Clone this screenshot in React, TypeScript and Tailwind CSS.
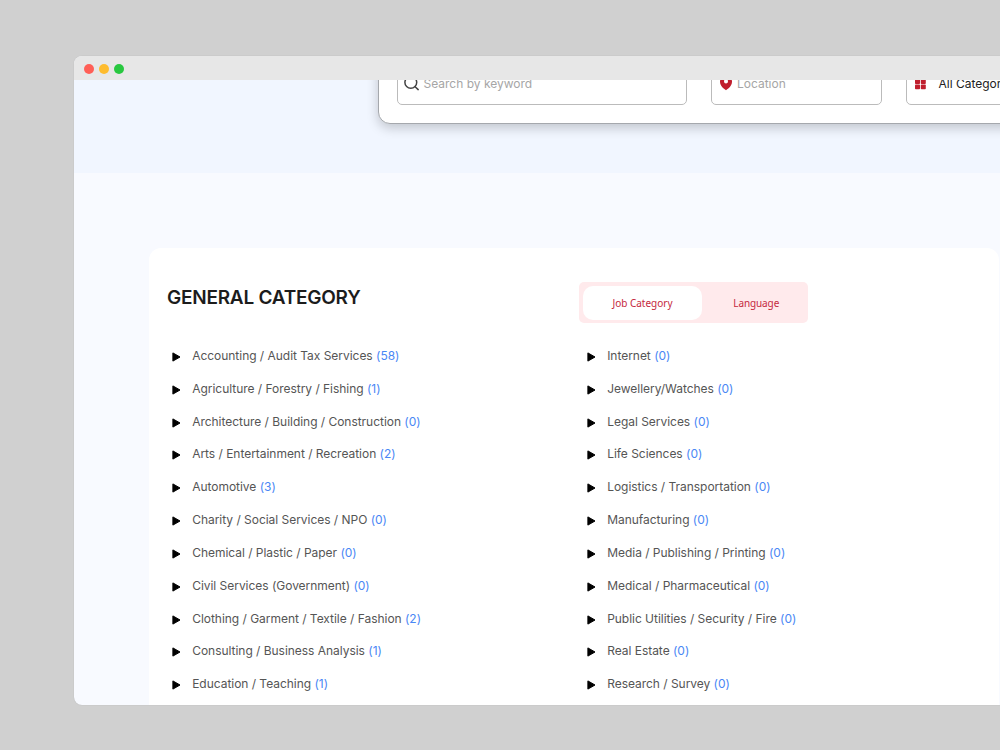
import React from "react";

type Category = { label: string; count: number };

const leftCategories: Category[] = [
  { label: "Accounting / Audit Tax Services", count: 58 },
  { label: "Agriculture / Forestry / Fishing", count: 1 },
  { label: "Architecture / Building / Construction", count: 0 },
  { label: "Arts / Entertainment / Recreation", count: 2 },
  { label: "Automotive", count: 3 },
  { label: "Charity / Social Services / NPO", count: 0 },
  { label: "Chemical / Plastic / Paper", count: 0 },
  { label: "Civil Services (Government)", count: 0 },
  { label: "Clothing / Garment / Textile / Fashion", count: 2 },
  { label: "Consulting / Business Analysis", count: 1 },
  { label: "Education / Teaching", count: 1 },
];

const rightCategories: Category[] = [
  { label: "Internet", count: 0 },
  { label: "Jewellery/Watches", count: 0 },
  { label: "Legal Services", count: 0 },
  { label: "Life Sciences", count: 0 },
  { label: "Logistics / Transportation", count: 0 },
  { label: "Manufacturing", count: 0 },
  { label: "Media / Publishing / Printing", count: 0 },
  { label: "Medical / Pharmaceutical", count: 0 },
  { label: "Public Utilities / Security / Fire", count: 0 },
  { label: "Real Estate", count: 0 },
  { label: "Research / Survey", count: 0 },
];

const SearchIcon = () => (
  <svg width="16" height="16" viewBox="0 0 16 16" fill="none" stroke="#444" strokeWidth="1.5" strokeLinecap="round">
    <circle cx="6.8" cy="6.4" r="5.9" />
    <path d="M11.1 10.7L14.2 13.6" />
  </svg>
);

const PinIcon = () => (
  <svg width="12" height="16" viewBox="0 0 12 16" fill="#c01f2e">
    <path
      fillRule="evenodd"
      d="M6 0C2.7 0 0 2.2 0 5.8C0 10 3.6 12.6 6 14.2C8.4 12.6 12 10 12 5.8C12 2.2 9.3 0 6 0ZM6 7.4A2 2 0 1 1 6 3.4A2 2 0 0 1 6 7.4Z"
    />
  </svg>
);

const GridIcon = () => (
  <svg width="11" height="11" viewBox="0 0 11 11" fill="#c01f2e">
    <rect width="5" height="5" rx="0.8" />
    <rect x="5.8" width="5" height="5" rx="0.8" />
    <rect y="5.6" width="5" height="4.6" rx="0.8" />
    <rect x="5.8" y="5.6" width="5" height="4.6" rx="0.8" />
  </svg>
);

const CategoryList = ({ items }: { items: Category[] }) => (
  <ul className="w-[415px] shrink-0">
    {items.map((item) => (
      <li key={item.label} className="flex h-[32.83px] items-center whitespace-nowrap text-[12px] tracking-[-0.03px] text-[#555]">
        <svg className="mt-[2px] mr-[11px] shrink-0" width="9" height="10" viewBox="0 0 9 10">
          <path d="M0.9 0.9L8 5L0.9 9.1Z" stroke="#000" strokeWidth="1" strokeLinejoin="round" />
        </svg>
        <span>
          {item.label} <span className="text-[#4a87f5]">({item.count})</span>
        </span>
      </li>
    ))}
  </ul>
);

const App: React.FC = () => {
  return (
    <div className="h-[750px] w-[1000px] overflow-hidden bg-[#d0d0d0] pt-14 pl-[74.4px] font-['Inter',sans-serif]">
      <div className="flex h-[649px] w-[1100px] flex-col overflow-hidden rounded-lg bg-[#f8faff] shadow-[0_0_1px_rgba(0,0,0,0.2)]">
        {/* Title bar */}
        <div className="flex h-6 shrink-0 items-center gap-[5px] bg-[#e7e7e7] pt-px pl-[10px]">
          <span className="size-[10px] rounded-full bg-[#ff5f57]" />
          <span className="size-[10px] rounded-full bg-[#febc2e]" />
          <span className="size-[10px] rounded-full bg-[#28c840]" />
        </div>

        <div className="min-h-0 flex-1 overflow-hidden">
          {/* Search bar */}
          <div className="flex h-[93px] items-end overflow-hidden bg-[#f1f6ff] pb-[49px] pl-[303.6px]">
            <div className="flex h-[90px] w-[760px] shrink-0 items-end gap-6 rounded-xl border border-[#a5a8ad] bg-white px-[18px] pb-[18px] text-[12px] shadow-[0_4px_12px_rgba(0,0,0,0.2)]">
              <div className="flex h-[42px] w-[290px] items-center rounded-[5px] border border-[#bbb] pl-[6px] text-[#a6a6a6]">
                <SearchIcon />
                <span className="ml-[3.5px]">Search by keyword</span>
              </div>
              <div className="flex h-[42px] w-[171px] items-center rounded-[5px] border border-[#bbb] pl-2 text-[#a6a6a6]">
                <PinIcon />
                <span className="ml-[5px]">Location</span>
              </div>
              <div className="flex h-[42px] w-[180px] items-center rounded-[5px] border border-[#bbb] pl-2 text-[#222]">
                <GridIcon />
                <span className="mb-px ml-[12.5px]">All Categories</span>
              </div>
            </div>
          </div>

          {/* Category card */}
          <div className="mt-[75px] ml-[74.6px] h-[520px] w-[850px] rounded-xl bg-white pt-[34px] pl-[18px]">
            <div className="flex">
              <h2 className="w-[412px] text-[19px] leading-[31px] font-semibold tracking-[-0.24px] text-[#1c1c1c]">
                GENERAL CATEGORY
              </h2>
              <div className="flex h-[41px] w-[229.5px] items-center rounded-[5px] bg-[#ffeaec] p-1 font-['Noto_Sans',sans-serif] text-[10px] text-[#c5283d]">
                <button className="h-[34px] w-[119px] rounded-[10px] bg-white pt-px">Job Category</button>
                <button className="h-[34px] flex-1 pt-px pl-[6px] tracking-[-0.1px]">Language</button>
              </div>
            </div>
            <div className="mt-[16.6px] flex pl-[5.2px]">
              <CategoryList items={leftCategories} />
              <CategoryList items={rightCategories} />
            </div>
          </div>
        </div>
      </div>
    </div>
  );
};

export default App;
